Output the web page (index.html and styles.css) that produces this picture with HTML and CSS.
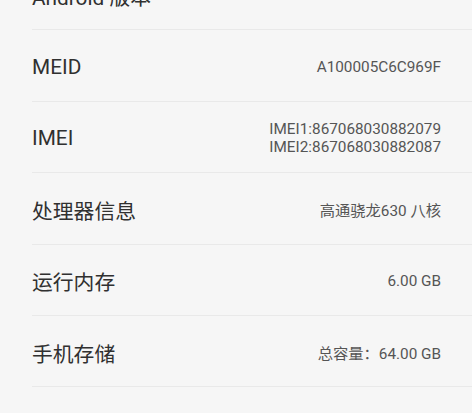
FILE: index.html
```html
<!DOCTYPE html>
<html>
<head>
<meta charset="utf-8">
<link rel="stylesheet" href="styles.css">
</head>
<body>
<div class="list">
  <div class="row"><span class="label">Android 版本</span><span class="value">8.1.0</span></div>
  <div class="row"><span class="label">MEID</span><span class="value">A100005C6C969F</span></div>
  <div class="row"><span class="label">IMEI</span><span class="value multi">IMEI1:867068030882079<br>IMEI2:867068030882087</span></div>
  <div class="row"><span class="label">处理器信息</span><span class="value">高通骁龙630 八核</span></div>
  <div class="row"><span class="label">运行内存</span><span class="value">6.00 GB</span></div>
  <div class="row"><span class="label">手机存储</span><span class="value">总容量：64.00 GB</span></div>
  <div class="row"><span class="label">分辨率</span><span class="value">2160 x 1080</span></div>
</div>
</body>
</html>
```
FILE: styles.css
```css
html, body {
  margin: 0;
  padding: 0;
  background: #f6f6f6;
  overflow: hidden;
  height: 413px;
}
body {
  font-family: Roboto, "Noto Sans CJK SC", sans-serif;
}
.list {
  margin-top: -41px;
  padding-left: 32px;
}
.row {
  box-sizing: border-box;
  height: 71.4px;
  display: flex;
  align-items: center;
  justify-content: space-between;
  padding-right: 31px;
  border-bottom: 1.5px solid #e9e9e9;
}
.label {
  font-size: 20.8px;
  color: #303030;
  padding-top: 3px;
}
.value {
  font-size: 15.3px;
  color: #555;
  text-align: right;
  padding-top: 2px;
}
.value.multi {
  font-size: 15.3px;
  line-height: 18px;
}
```
